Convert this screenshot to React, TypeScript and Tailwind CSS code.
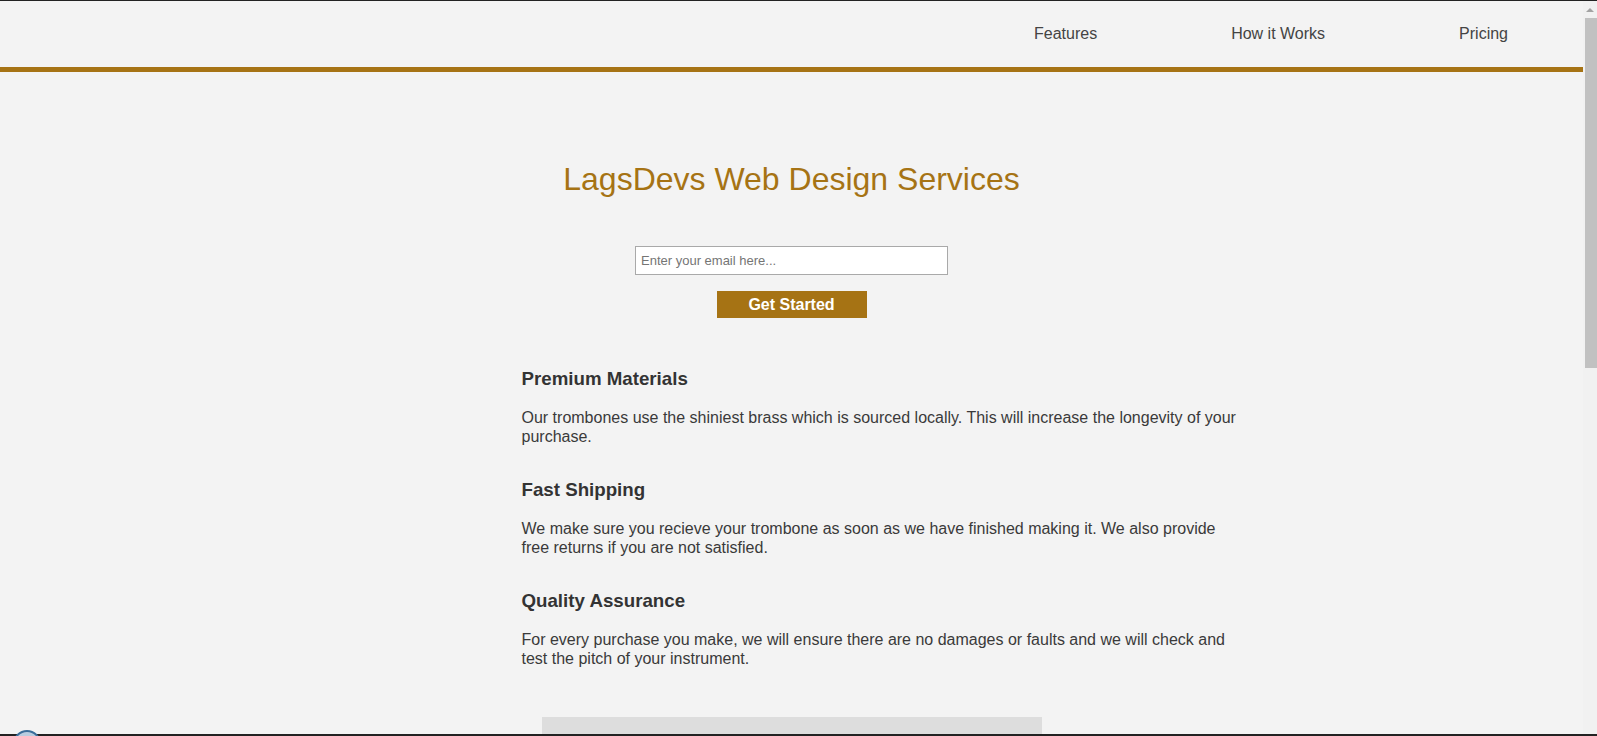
import React from 'react';

const features = [
  {
    title: 'Premium Materials',
    text: 'Our trombones use the shiniest brass which is sourced locally. This will increase the longevity of your purchase.',
  },
  {
    title: 'Fast Shipping',
    text: 'We make sure you recieve your trombone as soon as we have finished making it. We also provide free returns if you are not satisfied.',
  },
  {
    title: 'Quality Assurance',
    text: 'For every purchase you make, we will ensure there are no damages or faults and we will check and test the pitch of your instrument.',
  },
];

const plans = [
  { name: 'Tenor Trombone', price: '$600', items: ['Lorem ipsum.', 'Lorem ipsum.', 'Lorem ipsum dolor.', 'Lorem ipsum.'] },
  { name: 'Bass Trombone', price: '$900', items: ['Lorem ipsum.', 'Lorem ipsum.', 'Lorem ipsum dolor.', 'Lorem ipsum.'] },
  { name: 'Valve Trombone', price: '$1200', items: ['Plays similar to a Trumpet', 'Great for Jazz Bands', 'Lorem ipsum.', 'Lorem ipsum.'] },
];

export default function App() {
  return (
    <div className="min-h-screen bg-[#f3f3f3] border-t border-[#222] pr-[14px] font-['Liberation_Sans',Arial,sans-serif] text-[#333]">
      {/* Header */}
      <header className="h-[71px] border-b-[5px] border-[#a67314] flex items-center justify-end pr-[75px]">
        <nav className="flex gap-[134px] text-[16px] leading-[18px] text-[#444]">
          <a href="#features">Features</a>
          <a href="#how-it-works">How it Works</a>
          <a href="#pricing">Pricing</a>
        </nav>
      </header>

      {/* Hero */}
      <section className="flex flex-col items-center">
        <h1 className="mt-[89px] text-[32px] leading-[37px] font-normal text-[#a67314]">
          LagsDevs Web Design Services
        </h1>
        <form className="mt-[48px] flex flex-col items-center" onSubmit={(e) => e.preventDefault()}>
          <input
            type="email"
            placeholder="Enter your email here..."
            className="w-[313px] h-[29px] bg-white border border-[#a9a9a9] px-[5px] text-[13px] placeholder-[#757575] outline-none"
          />
          <button
            type="submit"
            className="mt-[16px] w-[150px] h-[27px] bg-[#a67314] text-white font-bold text-[16px] leading-[18px]"
          >
            Get Started
          </button>
        </form>
      </section>

      {/* Features */}
      <section id="features" className="mx-auto w-[1000px] pl-[230px] mt-[50px]">
        <div className="max-w-[724px] flex flex-col gap-[33px]">
          {features.map((f) => (
            <div key={f.title}>
              <h3 className="text-[18.72px] leading-[21.5px] font-bold">{f.title}</h3>
              <p className="mt-[19.7px] text-[16px] leading-[18.4px] text-[#3a3a3a]">{f.text}</p>
            </div>
          ))}
        </div>
      </section>

      {/* Video placeholder */}
      <section id="how-it-works" className="flex justify-center mt-[49px]">
        <div className="w-[500px] h-[300px] bg-[#dddddd]" />
      </section>

      {/* Pricing */}
      <section id="pricing" className="flex justify-center gap-[20px] mt-[60px] pb-[120px]">
        {plans.map((p) => (
          <div key={p.name} className="w-[240px] border border-[#ccc] flex flex-col items-center">
            <div className="w-full bg-[#ddd] py-[8px] text-center font-bold">{p.name}</div>
            <div className="mt-[12px] text-[22px] font-bold">{p.price}</div>
            <ul className="mt-[10px] text-[14px] flex flex-col items-center gap-[4px]">
              {p.items.map((it, i) => (
                <li key={i}>{it}</li>
              ))}
            </ul>
            <button className="my-[14px] px-[16px] py-[4px] bg-[#a67314] text-white font-bold">Select</button>
          </div>
        ))}
      </section>

      {/* Scrollbar */}
      <div className="fixed top-[1px] bottom-0 right-0 w-[14px] bg-[#f1f1f1]">
        <div className="mx-auto mt-[7px] w-0 h-0 border-l-[4px] border-r-[4px] border-b-[4px] border-l-transparent border-r-transparent border-b-[#a3a3a3]" />
        <div className="ml-[2px] mt-[6px] w-[12px] h-[350px] bg-[#c1c1c1]" />
      </div>

      {/* Window frame bits */}
      <div className="fixed bottom-0 left-0 right-0 h-[2px] bg-[#222]" />
      <div className="fixed left-[13px] bottom-[-22px] w-[28px] h-[28px] rounded-full border-2 border-[#3a6d9a] bg-[#b9cde0]" />
    </div>
  );
}
